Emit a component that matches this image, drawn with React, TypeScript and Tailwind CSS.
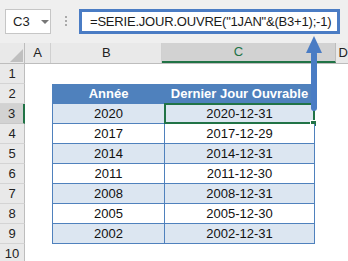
import React from "react"

const rows = [
  { n: 3, year: "2020", date: "2020-12-31" },
  { n: 4, year: "2017", date: "2017-12-29" },
  { n: 5, year: "2014", date: "2014-12-31" },
  { n: 6, year: "2011", date: "2011-12-30" },
  { n: 7, year: "2008", date: "2008-12-31" },
  { n: 8, year: "2005", date: "2005-12-30" },
  { n: 9, year: "2002", date: "2002-12-31" },
]

function RowHead({ n, selected }: { n: number; selected?: boolean }) {
  return (
    <div
      className={
        selected
          ? "w-[25px] h-[20px] flex items-center justify-center bg-[#d2d2d2] border-b border-[#c8c8c8] border-r-2 border-r-[#217346] text-[13px] text-[#222]"
          : "w-[25px] h-[20px] flex items-center justify-center bg-[#e9e9e9] border-b border-[#d4d4d4] border-r border-r-[#bdbdbd] text-[13px] text-[#222]"
      }
    >
      {n}
    </div>
  )
}

export default function App() {
  return (
    <div className="relative w-[348px] h-[261px] overflow-hidden bg-white font-['Liberation_Sans',Arial,sans-serif]">
      {/* formula bar */}
      <div className="h-[43px] bg-[#efefef] flex items-start pt-[9px]">
        <div className="ml-[5px] w-[46px] h-[25px] bg-white border border-[#c6c6c6] flex items-center pl-[7px] text-[13px] text-[#222]">
          C3
          <span className="ml-[11px] w-0 h-0 border-l-[4px] border-r-[4px] border-t-[4px] border-l-transparent border-r-transparent border-t-[#777]"></span>
        </div>
        <div className="ml-[14px] mt-[7px] flex flex-col gap-[2px]">
          <span className="w-[2px] h-[2px] bg-[#aaa]"></span>
          <span className="w-[2px] h-[2px] bg-[#aaa]"></span>
          <span className="w-[2px] h-[2px] bg-[#aaa]"></span>
        </div>
        <div className="ml-[12px] w-[261px] h-[25px] bg-white border-[3px] border-[#4a7cc4] flex items-center pl-[8px] text-[13px] tracking-[-0.2px] text-[#1a1a1a] whitespace-nowrap">
          =SERIE.JOUR.OUVRE("1JAN"&amp;(B3+1);-1)
        </div>
      </div>

      {/* column headers */}
      <div className="flex h-[21px] bg-[#e9e9e9] border-b border-[#bdbdbd] text-[13px] text-[#222]">
        <div className="relative w-[25px] h-full border-r border-[#bdbdbd]">
          <svg className="absolute left-[10px] top-[6px]" width="13" height="13" viewBox="0 0 13 13">
            <polygon points="13,0 13,13 0,13" fill="#bfbfbf" />
          </svg>
        </div>
        <div className="w-[27px] h-full border-r border-[#d0d0d0] flex items-center justify-center">A</div>
        <div className="w-[112px] h-full border-r border-[#d0d0d0] flex items-center justify-center">B</div>
        <div className="w-[175px] h-full bg-[#d2d2d2] border-b-2 border-[#217346] border-r border-r-[#bdbdbd] flex items-center">
          <span className="w-[152px] text-center text-[#217346]">C</span>
        </div>
        <div className="pl-[3px] flex items-center">D</div>
      </div>

      {/* row 1 */}
      <div className="flex">
        <RowHead n={1} />
      </div>

      {/* row 2 : table header */}
      <div className="flex">
        <RowHead n={2} />
        <div className="w-[27px]"></div>
        <div className="w-[113px] h-[20px] bg-[#4f81bd] border border-[#4f81bd] flex items-center justify-center text-white font-bold text-[13px]">
          Année
        </div>
        <div className="w-[150px] h-[20px] bg-[#4f81bd] border-y border-r border-[#4f81bd] flex items-center justify-center text-white font-bold text-[13px] whitespace-nowrap">
          Dernier Jour Ouvrable
        </div>
      </div>

      {rows.map((r, i) => (
        <div className="flex" key={r.n}>
          <RowHead n={r.n} selected={i === 0} />
          <div className="w-[27px]"></div>
          <div
            className={
              (i % 2 === 0 ? "bg-[#dce6f1] " : "bg-white ") +
              "w-[113px] h-[20px] border-x border-b border-[#4f81bd] flex items-center justify-center text-[13px] text-[#111]"
            }
          >
            {r.year}
          </div>
          <div
            className={
              (i % 2 === 0 ? "bg-[#dce6f1] " : "bg-white ") +
              "relative w-[150px] h-[20px] border-r border-b border-[#4f81bd] flex items-center justify-center text-[13px] text-[#111]"
            }
          >
            {r.date}
            {i === 0 && (
              <>
                <div className="absolute left-[-1px] top-[-1px] right-[-1px] bottom-[-1px] border-2 border-[#217346]"></div>
                <div className="absolute right-[-3px] bottom-[-4px] w-[5px] h-[5px] bg-[#217346] border border-white box-content"></div>
              </>
            )}
          </div>
        </div>
      ))}

      {/* row 10 */}
      <div className="flex">
        <RowHead n={10} />
      </div>

      {/* arrow from cell to formula */}
      <svg className="absolute left-[300px] top-[34px]" width="30" height="80" viewBox="0 0 30 80">
        <polygon points="14,2 22,19 6,19" fill="#4a7cc4" />
        <rect x="11" y="17" width="6" height="60" rx="3" fill="#4a7cc4" />
      </svg>
    </div>
  )
}
